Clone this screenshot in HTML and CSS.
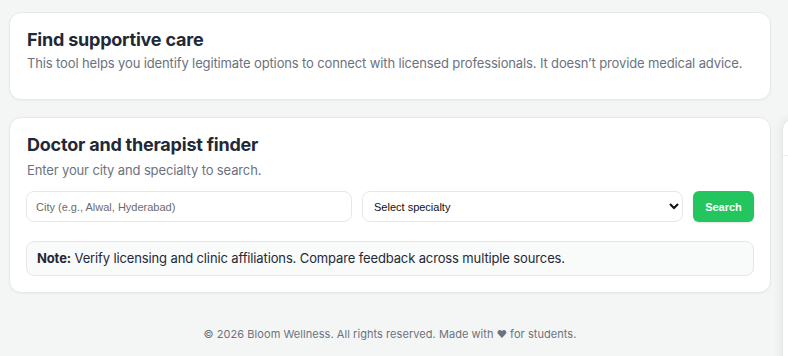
FILE: index.html
```html
<!DOCTYPE html>
<html lang="en">
<head>
<meta charset="utf-8">
<title>Find supportive care</title>
<link rel="stylesheet" href="styles.css">
</head>
<body>
<main class="page">
  <section class="card intro">
    <h2 class="card-title">Find supportive care</h2>
    <p class="card-sub">This tool helps you identify legitimate options to connect with licensed professionals. It doesn’t provide medical advice.</p>
  </section>
  <section class="card finder">
    <h2 class="card-title">Doctor and therapist finder</h2>
    <p class="card-sub">Enter your city and specialty to search.</p>
    <form class="search-row">
      <input class="field" type="text" placeholder="City (e.g., Alwal, Hyderabad)">
      <select class="field select">
        <option>Select specialty</option>
      </select>
      <button class="btn" type="button">Search</button>
    </form>
    <div class="note"><strong>Note:</strong> Verify licensing and clinic affiliations. Compare feedback across multiple sources.</div>
  </section>
  <footer class="footer">© 2026 Bloom Wellness. All rights reserved. Made with <span class="heart">♥</span> for students.</footer>
</main>
<aside class="side-panel"><div class="side-head"></div></aside>
</body>
</html>
```
FILE: styles.css
```css
* { box-sizing: border-box; }
html, body { margin: 0; padding: 0; }
body {
  background: #f4f6f5;
  font-family: Inter, "Noto Sans", sans-serif;
  color: #1f2937;
  height: 356px;
  overflow: hidden;
}
.page {
  width: 762px;
  margin-left: 9px;
  padding-top: 12px;
  display: flex;
  flex-direction: column;
  gap: 17px;
}
.card {
  background: #fff;
  border: 1px solid #e6e9e8;
  border-radius: 12px;
  padding: 15px 16px 16px;
  box-shadow: 0 1px 2px rgba(0,0,0,0.04);
}
.card-title {
  margin: 0 0 0 1px;
  font-size: 18px;
  line-height: 24px;
  font-weight: 700;
  letter-spacing: -0.012em;
  color: #1f2937;
}
.card-sub {
  margin: 1px 0 0 1px;
  font-size: 13px;
  line-height: 20px;
  letter-spacing: -0.01em;
  color: #6b7280;
  white-space: nowrap;
}
.intro .card-sub { margin-bottom: 10px; }
.finder .card-sub { margin-top: 3px; }
.search-row {
  margin-top: 11px;
  display: flex;
  gap: 10px;
  height: 31px;
}
.field {
  flex: 1 1 0;
  min-width: 0;
  height: 31px;
  border: 1px solid #e5e7eb;
  border-radius: 8px;
  background: #fff;
  padding: 0 9px;
  font-family: Arial, "Liberation Sans", sans-serif;
  font-size: 11px;
  color: #111;
}
.field::placeholder { color: #6b6b6b; }
.select { padding: 0 6px 0 7px; }
.btn {
  flex: 0 0 61px;
  height: 31px;
  border: 0;
  border-radius: 6px;
  background: #22c55e;
  color: #fff;
  font-family: Arial, "Liberation Sans", sans-serif;
  font-weight: 700;
  font-size: 11px;
  box-shadow: 0 1px 2px rgba(0,0,0,0.12);
}
.note {
  margin-top: 19px;
  background: #f9fafa;
  border: 1px solid #e5e7eb;
  border-radius: 8px;
  padding: 7px 10px;
  font-size: 13px;
  line-height: 19px;
  letter-spacing: -0.01em;
  color: #1f2937;
}
.note strong { font-weight: 700; }
.footer {
  margin-top: 16px;
  text-align: center;
  font-size: 11px;
  line-height: 16px;
  letter-spacing: 0.005em;
  color: #6b7280;
}
.heart { font-size: 10px; }
.side-panel {
  position: fixed;
  left: 782px;
  top: 118px;
  width: 320px;
  height: 400px;
  background: #fff;
  border: 1px solid #e3e6e5;
  border-radius: 12px;
  box-shadow: -2px 0 8px rgba(0,0,0,0.06);
}
.side-head {
  height: 37px;
  border-bottom: 1px solid #eceeed;
}
```
